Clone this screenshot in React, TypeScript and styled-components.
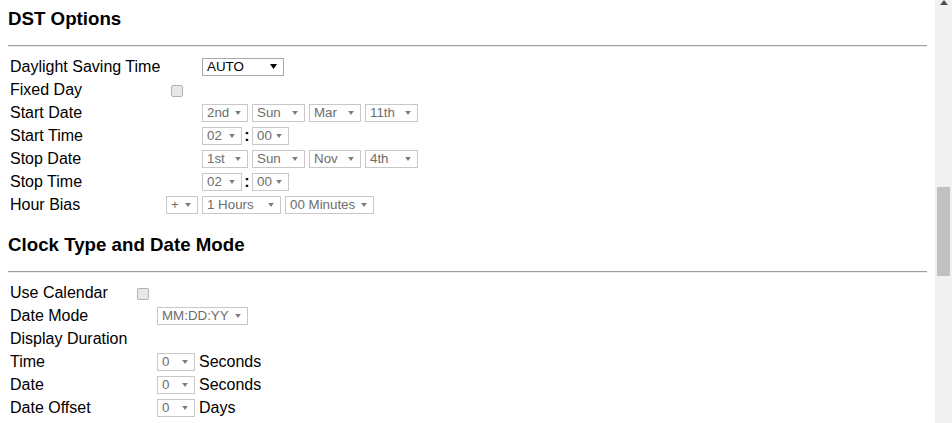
import React from 'react';
import styled, { createGlobalStyle } from 'styled-components';

const GlobalStyle = createGlobalStyle`
  html, body {
    margin: 0;
    padding: 0;
    background: #fff;
  }
  body {
    font-family: "Liberation Sans", Arial, sans-serif;
    color: #000;
  }
`;

type Opt = { value: string; width: number };

const Page = styled.div`
  display: flex;
  height: 423px;
  overflow: hidden;
`;

const Content = styled.main`
  flex: 1;
  padding: 0 8px;
`;

const Heading = styled.h3<{ $top: number }>`
  margin: ${(p) => p.$top}px 0 15px;
  font: bold 18.72px/22px "Liberation Sans", Arial, sans-serif;
  color: #000;
`;

const Rule = styled.hr`
  margin: 0 0 8px;
  height: 0;
  border: 0;
  border-top: 1px solid #a0a0a0;
  border-bottom: 1px solid #ededed;
`;

const Form = styled.div<{ $cols: string }>`
  display: grid;
  grid-template-columns: ${(p) => p.$cols};
  grid-auto-rows: 23px;
  align-items: center;
  padding-left: 2px;
`;

const Label = styled.div`
  grid-column: 1;
  font-size: 16px;
  line-height: 18px;
  white-space: nowrap;
  padding-top: 1px;
`;

const Cell = styled.div<{ $col: number }>`
  grid-column: ${(p) => p.$col};
  display: flex;
  align-items: center;
  gap: 4px;
  white-space: nowrap;
`;

const SelectBox = styled.span<{ $w: number; $off: boolean }>`
  display: inline-flex;
  align-items: center;
  box-sizing: border-box;
  flex: none;
  width: ${(p) => p.$w}px;
  height: 18px;
  padding: 0 6px 0 4px;
  border: 1px solid ${(p) => (p.$off ? '#c8c8c8' : '#a9a9a9')};
  background: #fff;
  color: ${(p) => (p.$off ? '#6d6d6d' : '#000')};
`;

const NativeSelect = styled.select`
  appearance: none;
  flex: 1;
  min-width: 0;
  margin: 0;
  padding: 0;
  border: 0;
  outline: none;
  background: transparent;
  font: 13.33px/16px "Liberation Sans", Arial, sans-serif;
  color: inherit;
  opacity: 1;

  &:disabled {
    color: inherit;
    opacity: 1;
  }
`;

const Check = styled.input`
  appearance: none;
  box-sizing: border-box;
  width: 12px;
  height: 12px;
  margin: 3px 0 0 5px;
  border: 1px solid #b2b2b2;
  border-radius: 2px;
  background: #e8e8e8;
`;

const Colon = styled.span`
  width: 6px;
  margin: 0 -2px;
  font-size: 16px;
  font-weight: bold;
  line-height: 18px;
  text-align: center;
`;

const Unit = styled.span`
  font-size: 16px;
  line-height: 18px;
`;

const Scrollbar = styled.div`
  flex: none;
  width: 17px;
  background: #f1f1f1;
  display: flex;
  flex-direction: column;
  align-items: center;
`;

const Thumb = styled.div`
  margin-top: 182px;
  width: 13px;
  height: 89px;
  background: #c1c1c1;
`;

const Arrow = ({ off }: { off: boolean }) => (
  <svg width={off ? 6 : 7} height={off ? 4 : 5} viewBox="0 0 7 5" style={{ flex: 'none' }}>
    <polygon points="0,0 7,0 3.5,5" fill={off ? '#7a7a7a' : '#000'} />
  </svg>
);

const Dropdown = ({ value, width, off = true }: Opt & { off?: boolean }) => (
  <SelectBox $w={width} $off={off}>
    <NativeSelect disabled={off} defaultValue={value}>
      <option value={value}>{value}</option>
    </NativeSelect>
    <Arrow off={off} />
  </SelectBox>
);

const dateParts = (week: string, month: string, day: string): Opt[] => [
  { value: week, width: 46 },
  { value: 'Sun', width: 53 },
  { value: month, width: 52 },
  { value: day, width: 53 },
];

const TimePair = () => (
  <Cell $col={3}>
    <Dropdown value="02" width={40} />
    <Colon>:</Colon>
    <Dropdown value="00" width={37} />
  </Cell>
);

const App = (): JSX.Element => {
  const startDate = dateParts('2nd', 'Mar', '11th');
  const stopDate = dateParts('1st', 'Nov', '4th');
  const durations = [
    { label: 'Time', unit: 'Seconds' },
    { label: 'Date', unit: 'Seconds' },
    { label: 'Date Offset', unit: 'Days' },
  ];

  return (
    <>
      <GlobalStyle />
      <Page>
        <Content>
          <Heading $top={8}>DST Options</Heading>
          <Rule />
          <Form $cols="156px 36px auto">
            <Label>Daylight Saving Time</Label>
            <Cell $col={3}>
              <Dropdown value="AUTO" width={82} off={false} />
            </Cell>

            <Label>Fixed Day</Label>
            <Cell $col={2}>
              <Check type="checkbox" disabled />
            </Cell>

            <Label>Start Date</Label>
            <Cell $col={3}>
              {startDate.map((o) => (
                <Dropdown key={o.value + o.width} {...o} />
              ))}
            </Cell>

            <Label>Start Time</Label>
            <TimePair />

            <Label>Stop Date</Label>
            <Cell $col={3}>
              {stopDate.map((o) => (
                <Dropdown key={o.value + o.width} {...o} />
              ))}
            </Cell>

            <Label>Stop Time</Label>
            <TimePair />

            <Label>Hour Bias</Label>
            <Cell $col={2}>
              <Dropdown value="+" width={32} />
            </Cell>
            <Cell $col={3}>
              <Dropdown value="1 Hours" width={79} />
              <Dropdown value="00 Minutes" width={89} />
            </Cell>
          </Form>

          <Heading $top={18}>Clock Type and Date Mode</Heading>
          <Rule />
          <Form $cols="122px 25px auto">
            <Label>Use Calendar</Label>
            <Cell $col={2}>
              <Check type="checkbox" disabled />
            </Cell>

            <Label>Date Mode</Label>
            <Cell $col={3}>
              <Dropdown value="MM:DD:YY" width={91} />
            </Cell>

            <Label>Display Duration</Label>

            {durations.map((d) => (
              <React.Fragment key={d.label}>
                <Label>{d.label}</Label>
                <Cell $col={3}>
                  <Dropdown value="0" width={38} />
                  <Unit>{d.unit}</Unit>
                </Cell>
              </React.Fragment>
            ))}
          </Form>
        </Content>
        <Scrollbar>
          <svg width="8" height="5" viewBox="0 0 8 5">
            <polygon points="0,5 8,5 4,0" fill="#505050" />
          </svg>
          <Thumb />
        </Scrollbar>
      </Page>
    </>
  );
};

export default App;
